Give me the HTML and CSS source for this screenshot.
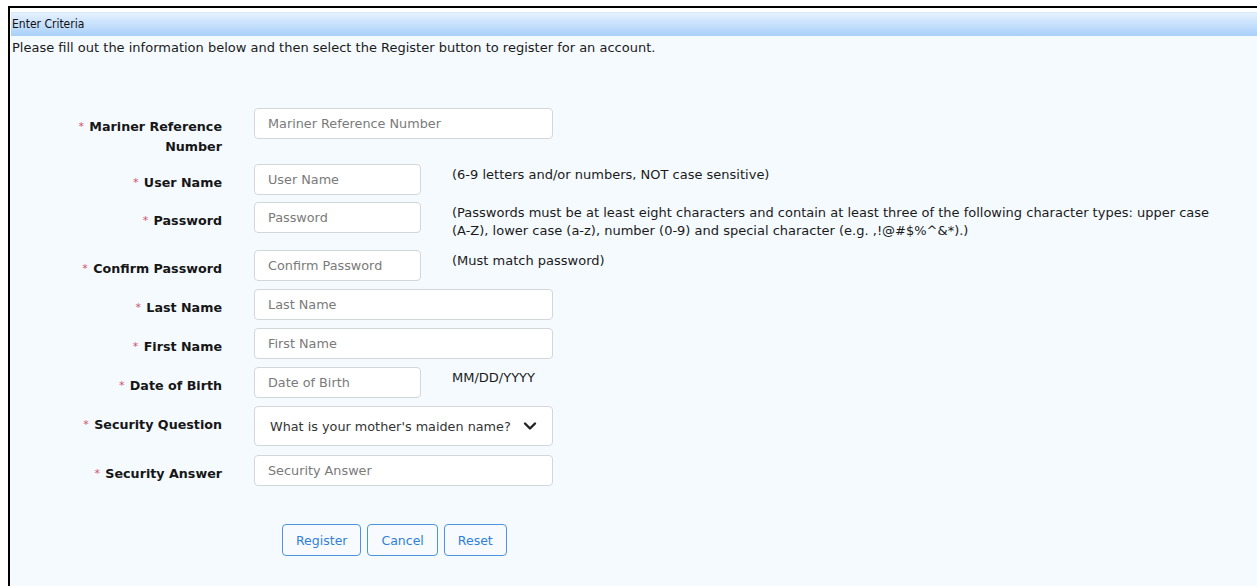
FILE: index.html
```html
<!DOCTYPE html>
<html lang="en">
<head>
<meta charset="utf-8">
<title>Register</title>
<link rel="stylesheet" href="styles.css">
</head>
<body>
<div class="frame">
  <div class="panel">
    <div class="panel-head">Enter Criteria</div>
    <div class="panel-body">
      <p class="intro">Please fill out the information below and then select the Register button to register for an account.</p>

      <form class="reg-form">
        <div class="row">
          <label class="lbl"><span class="req">*</span> Mariner Reference<br>Number</label>
          <div class="field"><input class="inp wide" type="text" placeholder="Mariner Reference Number"></div>
        </div>
        <div class="row row-tight">
          <label class="lbl"><span class="req">*</span> User Name</label>
          <div class="field"><input class="inp short" type="text" placeholder="User Name"></div>
          <div class="hint">(6-9 letters and/or numbers, NOT case sensitive)</div>
        </div>
        <div class="row">
          <label class="lbl"><span class="req">*</span> Password</label>
          <div class="field"><input class="inp short" type="password" placeholder="Password"></div>
          <div class="hint">(Passwords must be at least eight characters and contain at least three of the following character types: upper case <span class="nowrap">(A-Z),</span> lower case (a-z), number (0-9) and special character (e.g. ,!@#$%^&amp;*).)</div>
        </div>
        <div class="row">
          <label class="lbl"><span class="req">*</span> Confirm Password</label>
          <div class="field"><input class="inp short" type="password" placeholder="Confirm Password"></div>
          <div class="hint">(Must match password)</div>
        </div>
        <div class="row">
          <label class="lbl"><span class="req">*</span> Last Name</label>
          <div class="field"><input class="inp wide" type="text" placeholder="Last Name"></div>
        </div>
        <div class="row">
          <label class="lbl"><span class="req">*</span> First Name</label>
          <div class="field"><input class="inp wide" type="text" placeholder="First Name"></div>
        </div>
        <div class="row">
          <label class="lbl"><span class="req">*</span> Date of Birth</label>
          <div class="field"><input class="inp short" type="text" placeholder="Date of Birth"></div>
          <div class="hint">MM/DD/YYYY</div>
        </div>
        <div class="row row-select">
          <label class="lbl"><span class="req">*</span> Security Question</label>
          <div class="field">
            <div class="select">
              <span>What is your mother's maiden name?</span>
              <svg class="chev" width="14" height="10" viewBox="0 0 14 10"><path d="M2 2.5 L7 7.5 L12 2.5" fill="none" stroke="#222" stroke-width="2.4" stroke-linecap="round" stroke-linejoin="round"/></svg>
            </div>
          </div>
        </div>
        <div class="row">
          <label class="lbl"><span class="req">*</span> Security Answer</label>
          <div class="field"><input class="inp wide" type="text" placeholder="Security Answer"></div>
        </div>

        <div class="actions">
          <button type="button" class="btn">Register</button>
          <button type="button" class="btn">Cancel</button>
          <button type="button" class="btn">Reset</button>
        </div>
      </form>
    </div>
  </div>
</div>
</body>
</html>
```

FILE: styles.css
```css
html, body {
  margin: 0;
  padding: 0;
  background: #ffffff;
  height: 100%;
  overflow: hidden;
}

body {
  padding: 6px 0 0 8px;
  box-sizing: border-box;
  font-family: "DejaVu Sans", Verdana, sans-serif;
  font-size: 13px;
  color: #1a1a1a;
}

.frame {
  border-top: 2px solid #000;
  border-left: 2px solid #000;
  height: 100%;
  box-sizing: border-box;
  padding: 4px 0 0 1px;
  background: #ffffff;
}

.panel {
  height: 100%;
  display: flex;
  flex-direction: column;
}

.panel-head {
  height: 24px;
  line-height: 23px;
  padding-left: 1px;
  font-family: "DejaVu Sans Condensed", "DejaVu Sans", sans-serif;
  font-size: 12px;
  color: #111;
  background: linear-gradient(to bottom, #e6f2fe 0%, #cfe5fd 35%, #a9d0f9 100%);
  border-top: 1px solid #d6eafc;
  box-sizing: border-box;
}

.panel-body {
  flex: 1;
  background: #f5faff;
  margin-left: -1px;
  padding-left: 1px;
}

.intro {
  margin: 0;
  padding: 3px 0 0 1px;
  line-height: 18px;
  color: #1a1a1a;
}

.reg-form {
  margin-top: 51px;
  display: flex;
  flex-direction: column;
  gap: 8px;
}

.row {
  display: flex;
  align-items: flex-start;
}

.row-tight {
  margin-bottom: -1px;
}

.lbl {
  width: 211px;
  flex: none;
  text-align: right;
  font-weight: bold;
  font-size: 12.7px;
  line-height: 19px;
  padding: 9px 0 0;
  color: #161616;
}

.req {
  color: #d0506a;
  font-weight: normal;
  font-size: 11px;
  position: relative;
  top: -1px;
  margin-right: 1px;
}

.field {
  margin-left: 32px;
  flex: none;
}

.inp {
  display: block;
  box-sizing: border-box;
  height: 31px;
  border: 1px solid #d3d7dc;
  border-radius: 4px;
  background: #fff;
  padding: 0 13px;
  font-family: "DejaVu Sans", Verdana, sans-serif;
  font-size: 12.8px;
  color: #333;
  outline: none;
}

.inp::placeholder {
  color: #7a7a7a;
}

.inp.wide { width: 299px; }
.inp.short { width: 167px; }

.hint {
  margin-left: 31px;
  padding: 2px 18px 2px 0;
  line-height: 18px;
  color: #1a1a1a;
  flex: 1;
}

.nowrap {
  white-space: nowrap;
}

.row-select {
  margin-bottom: 1px;
}

.select {
  box-sizing: border-box;
  width: 299px;
  height: 40px;
  border: 1px solid #d3d7dc;
  border-radius: 4px;
  background: #fff;
  display: flex;
  align-items: center;
  justify-content: space-between;
  padding: 0 15px 0 15px;
  color: #333;
  font-size: 12.8px;
}

.chev {
  display: block;
}

.actions {
  margin-top: 30px;
  margin-left: 271px;
  display: flex;
  gap: 6px;
}

.btn {
  height: 32px;
  padding: 0 13px;
  border: 1px solid #4d94dc;
  border-radius: 4px;
  background: #f7fbff;
  color: #2f80d8;
  font-family: "DejaVu Sans", Verdana, sans-serif;
  font-size: 12.5px;
  cursor: pointer;
}
```
